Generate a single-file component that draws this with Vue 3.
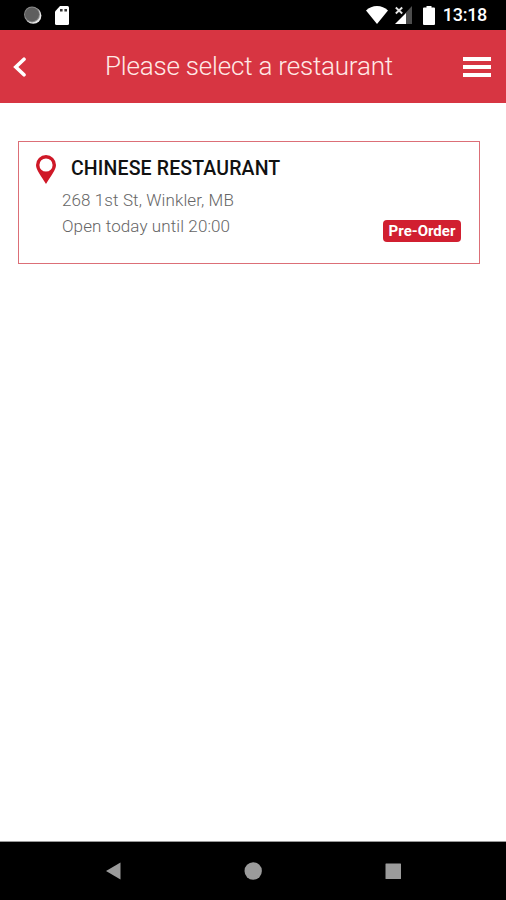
<template>
  <div class="screen">
    <div class="status-bar">
      <div class="status-left">
        <svg class="icon-sync" viewBox="0 0 18 18">
          <circle cx="9.200" cy="9.600" r="8.200" fill="#e8e8e8" />
          <circle cx="8" cy="8.400" r="8" fill="#8a8a8a" />
          <circle cx="8" cy="8.400" r="7" fill="#5e5e5e" />
        </svg>
        <svg class="icon-sd" viewBox="0 0 14 19">
          <path
              d="M5 0h7.500Q14 0 14 1.500V17.500Q14 19 12.500 19H1.500Q0 19 0 17.500V5.500z"
              fill="#fff"
          />
          <path d="M5 3h2.600v2.600H5zM9.400 3h2.600v2.600H9.400z" fill="#333" />
        </svg>
      </div>
      <div class="status-right">
        <svg class="icon-wifi" viewBox="0 0 22 18">
          <path d="M11 18L0 4.600Q4.600 0 11 0t11 4.600z" fill="#fff" />
        </svg>
        <svg class="icon-signal" viewBox="0 0 18 18">
          <path d="M17 0v18H10.500V7z" fill="#4d4d4d" />
          <path d="M11 7v11H0z" fill="#fff" />
          <path d="M0.800 1.500l6.400 6M7.200 1.500l-6.400 6" stroke="#e4e4e4" stroke-width="1.900" />
        </svg>
        <svg class="icon-battery" viewBox="0 0 12 19">
          <path
              d="M3.500 0h5v1.500H11q1 0 1 1v15.500q0 1-1 1H1q-1 0-1-1V2.500q0-1 1-1h2.500z"
              fill="#fff"
          />
        </svg>
        <span class="clock">13:18</span>
      </div>
    </div>

    <header class="header">
      <button class="header-button" aria-label="Back">
        <svg class="icon-back" viewBox="0 0 13 20">
          <path
              d="M11 2.200L2.800 10l8.200 7.800"
              fill="none"
              stroke="#fff"
              stroke-width="3.600"
              stroke-linecap="round"
          />
        </svg>
      </button>
      <h1 class="title">Please select a restaurant</h1>
      <button class="header-button" aria-label="Menu">
        <svg class="icon-menu" viewBox="0 0 28 20">
          <path d="M0 0h28v4H0zM0 8h28v4H0zM0 16h28v4H0z" fill="#fff" />
        </svg>
      </button>
    </header>

    <main class="content">
      <div v-for="item in restaurants" :key="item.name" class="card">
        <div class="card-heading">
          <svg class="icon-pin" viewBox="0 0 20 29">
            <path
                d="M10 0a10 10 0 0 1 10 10c0 5-5.500 11.500-10 19C5.500 21.500 0 15 0 10A10 10 0 0 1 10 0zm0 3.400a6.600 6.600 0 1 0 0 13.200 6.600 6.600 0 0 0 0-13.200z"
                fill="#cf1827"
            />
          </svg>
          <h2 class="card-name">{{ item.name }}</h2>
        </div>
        <div class="card-body">
          <div class="card-info">
            <div class="address">{{ item.address }}</div>
            <div class="hours">{{ item.hours }}</div>
          </div>
          <span v-if="item.preOrder" class="badge">Pre-Order</span>
        </div>
      </div>
    </main>

    <nav class="nav-bar">
      <svg class="nav-icon" viewBox="0 0 18 18">
        <path d="M16.500 0.500v17L2 9z" fill="#9b9b9b" />
      </svg>
      <svg class="nav-icon" viewBox="0 0 18 18">
        <circle cx="9.200" cy="9" r="8.700" fill="#9b9b9b" />
      </svg>
      <svg class="nav-icon" viewBox="0 0 18 18">
        <rect x="1.500" y="1.500" width="15.500" height="15.500" rx="0.500" fill="#9b9b9b" />
      </svg>
    </nav>
  </div>
</template>

<script setup>
import { ref } from 'vue';

const restaurants = ref([
  {
    name: 'CHINESE RESTAURANT',
    address: '268 1st St, Winkler, MB',
    hours: 'Open today until 20:00',
    preOrder: true
  }
]);
</script>

<style>
body {
  margin: 0;
}
</style>

<style scoped>
.screen {
  display: flex;
  flex-direction: column;
  height: 100vh;
  overflow: hidden;
  background: #fff;
  font-family: Roboto, "Liberation Sans", sans-serif;
}

.screen svg {
  display: block;
  flex-shrink: 0;
}

/* Status bar */
.status-bar {
  display: flex;
  justify-content: space-between;
  box-sizing: border-box;
  height: 30px;
  padding: 0 19px 0 24px;
  background: #000;
}

.status-left,
.status-right {
  display: flex;
  align-items: center;
}

.icon-sync {
  width: 18px;
  height: 18px;
  margin-right: 13px;
}

.icon-sd {
  width: 14px;
  height: 19px;
}

.icon-wifi {
  width: 22px;
  height: 18px;
  margin-right: 7px;
}

.icon-signal {
  width: 18px;
  height: 18px;
  margin-right: 10px;
}

.icon-battery {
  width: 12px;
  height: 19px;
  margin-right: 8px;
}

.clock {
  font-size: 18px;
  font-weight: 500;
  line-height: 32px;
  letter-spacing: -0.3px;
  color: #fff;
}

/* Header */
.header {
  display: flex;
  align-items: center;
  justify-content: space-between;
  box-sizing: border-box;
  height: 73px;
  padding: 0 15px 0 13px;
  background: #d73542;
}

.header-button {
  width: 28px;
  padding: 0;
  border: none;
  background: none;
}

.icon-back {
  width: 13px;
  height: 20px;
}

.icon-menu {
  width: 28px;
  height: 20px;
}

.title {
  margin: 0 6px 1px 0;
  font-size: 26px;
  font-weight: 300;
  line-height: 30px;
  letter-spacing: -0.2px;
  white-space: nowrap;
  color: #ffe9e6;
}

/* Restaurant list */
.content {
  flex: 1;
  padding: 38px 26px 0 18px;
}

.card {
  box-sizing: border-box;
  height: 123px;
  padding: 13px 18px 0 17px;
  border: 1px solid #dc6f77;
}

.card-heading {
  display: flex;
  align-items: center;
  height: 29px;
}

.icon-pin {
  width: 20px;
  height: 29px;
  margin-right: 15px;
}

.card-name {
  margin: 0 0 1px;
  font-size: 19.500px;
  font-weight: 500;
  line-height: 24px;
  letter-spacing: 0.140px;
  white-space: nowrap;
  color: #111;
}

.card-body {
  display: flex;
  align-items: flex-end;
  justify-content: space-between;
  padding: 3px 0 0 26px;
}

.card-info {
  font-size: 17px;
  font-weight: 300;
  line-height: 26px;
  letter-spacing: 0.100px;
  white-space: nowrap;
  color: #666;
}

.badge {
  box-sizing: border-box;
  width: 78px;
  height: 22px;
  margin-bottom: -3px;
  border-radius: 4px;
  background: #d11f30;
  color: #fff;
  font-size: 15px;
  font-weight: 700;
  line-height: 22px;
  text-align: center;
}

/* Navigation bar */
.nav-bar {
  display: flex;
  align-items: center;
  justify-content: space-between;
  box-sizing: border-box;
  height: 59px;
  padding: 0 104px;
  border-top: 1px solid #999;
  background: #000;
}

.nav-icon {
  width: 18px;
  height: 18px;
}
</style>
